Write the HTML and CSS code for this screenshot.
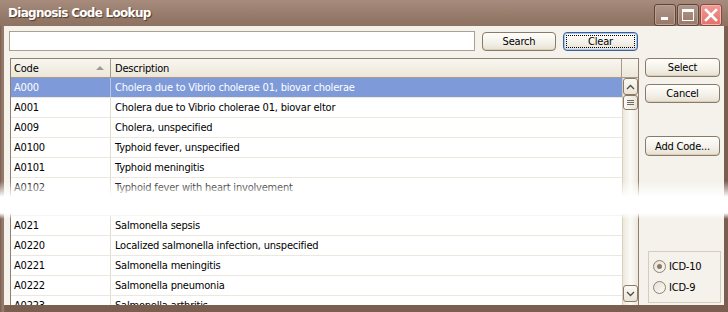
FILE: index.html
```html
<!DOCTYPE html>
<html lang="en">
<head>
    <meta charset="UTF-8">
    <title>Diagnosis Code Lookup</title>
    <link rel="stylesheet" href="styles.css">
</head>
<body>
    <div class="window">
        <div class="titlebar">
            <span class="title">Diagnosis Code Lookup</span>
            <div class="title-buttons">
                <span class="tbtn"><span class="ico-min"></span></span>
                <span class="tbtn"><span class="ico-max"></span></span>
                <span class="tbtn close">
                    <svg width="14" height="14" viewBox="0 0 14 14"><path d="M2 2 L12 12 M12 2 L2 12" stroke="#fff" stroke-width="2.6" stroke-linecap="square"/></svg>
                </span>
            </div>
        </div>

        <div class="client">
            <div class="search-row">
                <input class="search-input" type="text">
                <button class="btn search-btn">Search</button>
                <button class="btn clear-btn"><span class="focus">Clear</span></button>
            </div>

            <div class="main-row">
                <div class="listbox">
                    <div class="list-head">
                        <div class="hcell code-col">Code <span class="sort"></span></div>
                        <div class="hcell desc-col">Description</div>
                        <div class="hcell filler"></div>
                    </div>
                    <div class="list-body">
                        <div class="rows">
                            <div class="row selected"><span class="code-col">A000</span><span class="desc-col">Cholera due to Vibrio cholerae 01, biovar cholerae</span></div>
                            <div class="row"><span class="code-col">A001</span><span class="desc-col">Cholera due to Vibrio cholerae 01, biovar eltor</span></div>
                            <div class="row"><span class="code-col">A009</span><span class="desc-col">Cholera, unspecified</span></div>
                            <div class="row"><span class="code-col">A0100</span><span class="desc-col">Typhoid fever, unspecified</span></div>
                            <div class="row"><span class="code-col">A0101</span><span class="desc-col">Typhoid meningitis</span></div>
                            <div class="row"><span class="code-col">A0102</span><span class="desc-col">Typhoid fever with heart involvement</span></div>
                            <div class="row gap"></div>
                            <div class="row"><span class="code-col">A021</span><span class="desc-col">Salmonella sepsis</span></div>
                            <div class="row"><span class="code-col">A0220</span><span class="desc-col">Localized salmonella infection, unspecified</span></div>
                            <div class="row"><span class="code-col">A0221</span><span class="desc-col">Salmonella meningitis</span></div>
                            <div class="row"><span class="code-col">A0222</span><span class="desc-col">Salmonella pneumonia</span></div>
                            <div class="row"><span class="code-col">A0223</span><span class="desc-col">Salmonella arthritis</span></div>
                        </div>
                        <div class="scrollbar">
                            <div class="sbtn">
                                <svg width="9" height="6" viewBox="0 0 9 6"><path d="M1 5 L4.5 1.5 L8 5" fill="none" stroke="#4d4d4d" stroke-width="1.3"/></svg>
                            </div>
                            <div class="thumb"><span></span><span></span><span></span></div>
                            <div class="track"></div>
                            <div class="sbtn">
                                <svg width="9" height="6" viewBox="0 0 9 6"><path d="M1 1 L4.5 4.5 L8 1" fill="none" stroke="#4d4d4d" stroke-width="1.3"/></svg>
                            </div>
                        </div>
                    </div>
                </div>

                <div class="side">
                    <button class="btn side-btn">Select</button>
                    <button class="btn side-btn">Cancel</button>
                    <button class="btn side-btn add-btn">Add Code...</button>
                    <div class="radio-group">
                        <label class="radio"><span class="dot checked"></span>ICD-10</label>
                        <label class="radio"><span class="dot"></span>ICD-9</label>
                    </div>
                </div>
            </div>
        </div>

        <!-- torn edge between the two halves of the capture -->
        <div class="fade"></div>
    </div>
</body>
</html>
```

FILE: styles.css
```css
/* Page */
body {
    margin: 0;
    font-family: "DejaVu Sans Condensed", "DejaVu Sans", Verdana, sans-serif;
    font-stretch: condensed;
    font-size: 11px;
    letter-spacing: -0.2px;
    color: #000;
    background: #fff;
}

.window {
    position: relative;
    width: 728px;
    height: 312px;
    display: flex;
    flex-direction: column;
    background: linear-gradient(to right, #7a5f50, #9b7f70 3px, #7a5f50 5px);
    overflow: hidden;
}

/* Title bar */
.titlebar {
    height: 26px;
    display: flex;
    align-items: center;
    justify-content: space-between;
    padding: 0 6px 0 8px;
    background: linear-gradient(to bottom, #a78b7c, #967a6a 60%, #8d7161);
}

.title {
    color: #fff;
    font-family: "DejaVu Sans", Verdana, sans-serif;
    font-stretch: normal;
    font-weight: bold;
    font-size: 12px;
    letter-spacing: -0.7px;
    text-shadow: 1px 1px 1px #4e3a2f;
}

.title-buttons {
    display: flex;
    gap: 1px;
    padding-top: 3px;
}

.tbtn {
    width: 20px;
    height: 20px;
    border: 1px solid #5c4639;
    border-radius: 3px;
    box-shadow: inset 0 0 0 1px #b9a193;
    background: linear-gradient(to bottom, #b0978a, #98796a);
    display: flex;
    align-items: center;
    justify-content: center;
    position: relative;
}

.tbtn.close {
    background: linear-gradient(to bottom, #f29a94, #e4716b);
    box-shadow: inset 0 0 0 1px #f6b6b0;
    border-color: #8a4a44;
}

.ico-min {
    width: 7px;
    height: 3px;
    background: #fff;
    margin-top: 8px;
    margin-right: 2px;
}

.ico-max {
    width: 10px;
    height: 8px;
    border: 1px solid #fff;
    border-top-width: 3px;
}

/* Client area */
.client {
    flex: 1;
    margin: 0 4px 7px 4px;
    background: #f4f2eb;
    display: flex;
    flex-direction: column;
    overflow: hidden;
}

.search-row {
    display: flex;
    align-items: center;
    padding: 5px 0 0 5px;
    height: 20px;
}

.search-input {
    width: 466px;
    height: 20px;
    box-sizing: border-box;
    border: 1px solid #a9a090;
    background: #fff;
    margin: 0;
}

.btn {
    font-family: inherit;
    font-stretch: condensed;
    font-size: 11px;
    letter-spacing: -0.2px;
    color: #000;
    height: 19px;
    box-sizing: border-box;
    padding: 0;
    border: 1px solid #8b7a68;
    border-radius: 4px;
    background: linear-gradient(to bottom, #fefefc, #f3f0e8 60%, #e6e0d0);
    box-shadow: inset 0 -1px 0 #d8d0bd;
}

.search-btn {
    width: 74px;
    margin-left: 7px;
}

.clear-btn {
    width: 75px;
    margin-left: 7px;
    border-color: #3d5f96;
    box-shadow: inset 0 0 0 1px #a9c6f0;
    padding: 2px;
}

.clear-btn .focus {
    display: block;
    height: 100%;
    box-sizing: border-box;
    border: 1px dotted #000;
    line-height: 11px;
}

.main-row {
    flex: 1;
    display: flex;
    padding: 7px 0 0 6px;
    min-height: 0;
}

/* List view */
.listbox {
    width: 629px;
    box-sizing: border-box;
    border: 1px solid #8e7f70;
    border-bottom: none;
    background: #fff;
    display: flex;
    flex-direction: column;
    overflow: hidden;
}

.list-head {
    display: flex;
    height: 19px;
    flex-shrink: 0;
}

.hcell {
    box-sizing: border-box;
    height: 19px;
    line-height: 19px;
    padding-left: 3px;
    background: linear-gradient(to bottom, #f8f6f0, #ece7da);
    border-bottom: 1px solid #a89a88;
    border-right: 1px solid #a89a88;
    position: relative;
}

.hcell.filler {
    width: 16px;
    padding: 0;
    border-right: none;
    border-radius: 0 4px 0 0;
}

.code-col {
    width: 100px;
    box-sizing: border-box;
    flex-shrink: 0;
}

.desc-col {
    width: 511px;
    box-sizing: border-box;
    flex-shrink: 0;
    padding-left: 4px;
}

.sort {
    position: absolute;
    right: 6px;
    top: 7px;
    width: 0;
    height: 0;
    border-left: 4px solid transparent;
    border-right: 4px solid transparent;
    border-bottom: 4px solid #a39a8e;
}

.list-body {
    flex: 1;
    display: flex;
    min-height: 0;
}

.rows {
    width: 611px;
    flex-shrink: 0;
}

.row {
    display: flex;
    height: 20px;
    box-sizing: border-box;
    line-height: 19px;
    border-bottom: 1px solid #ece8de;
    white-space: nowrap;
    overflow: hidden;
}

.row .code-col {
    padding-left: 3px;
    border-right: 1px solid #e2ddd1;
}

.row.gap {
    height: 18px;
}

.row.selected {
    background: #7e9ad9;
    color: #fff;
}

.row.selected .code-col {
    border-right-color: #b5c4e8;
}

/* Scrollbar */
.scrollbar {
    width: 16px;
    display: flex;
    flex-direction: column;
    background: linear-gradient(to right, #ede8dc, #fbfaf6 50%, #ede8dc);
    border-left: 1px solid #d8d0c0;
    box-sizing: border-box;
}

.sbtn {
    height: 17px;
    flex-shrink: 0;
    box-sizing: border-box;
    border: 1px solid #8b7a68;
    border-radius: 3px;
    background: linear-gradient(to bottom, #fbf9f4, #ebe5d7);
    display: flex;
    align-items: center;
    justify-content: center;
}

.scrollbar .sbtn:last-child {
    margin-bottom: 3px;
}

.thumb {
    height: 15px;
    flex-shrink: 0;
    box-sizing: border-box;
    border: 1px solid #8b7a68;
    border-radius: 3px;
    background: linear-gradient(to right, #fbf9f4, #ebe5d7);
    display: flex;
    flex-direction: column;
    align-items: center;
    justify-content: center;
    gap: 1px;
}

.thumb span {
    width: 7px;
    height: 1px;
    background: #6c6c6c;
}

.track {
    flex: 1;
}

/* Right column */
.side {
    width: 76px;
    margin-left: 6px;
    display: flex;
    flex-direction: column;
    align-items: flex-start;
}

.side-btn {
    width: 75px;
    margin-bottom: 7px;
}

.add-btn {
    margin-top: 26px;
    height: 20px;
}

.radio-group {
    margin-top: auto;
    margin-left: 3px;
    margin-bottom: 2px;
    width: 73px;
    height: 52px;
    box-sizing: border-box;
    border: 1px solid #d4ccbc;
    padding: 8px 0 0 4px;
    display: flex;
    flex-direction: column;
    gap: 8px;
}

.radio {
    display: flex;
    align-items: center;
    gap: 3px;
    height: 13px;
}

.dot {
    width: 13px;
    height: 13px;
    box-sizing: border-box;
    border: 1px solid #8e8172;
    border-radius: 50%;
    background: linear-gradient(135deg, #e6e0d2, #fbfaf6);
    display: flex;
    align-items: center;
    justify-content: center;
}

.dot.checked::after {
    content: "";
    width: 5px;
    height: 5px;
    border-radius: 50%;
    background: #8a7a6a;
}

/* White band where the capture was cut */
.fade {
    position: absolute;
    left: 0;
    right: 0;
    top: 181px;
    height: 38px;
    background: linear-gradient(to bottom, rgba(255,255,255,0) 0, #fff 42%, #fff 84%, rgba(255,255,255,0) 100%);
    pointer-events: none;
}
```
